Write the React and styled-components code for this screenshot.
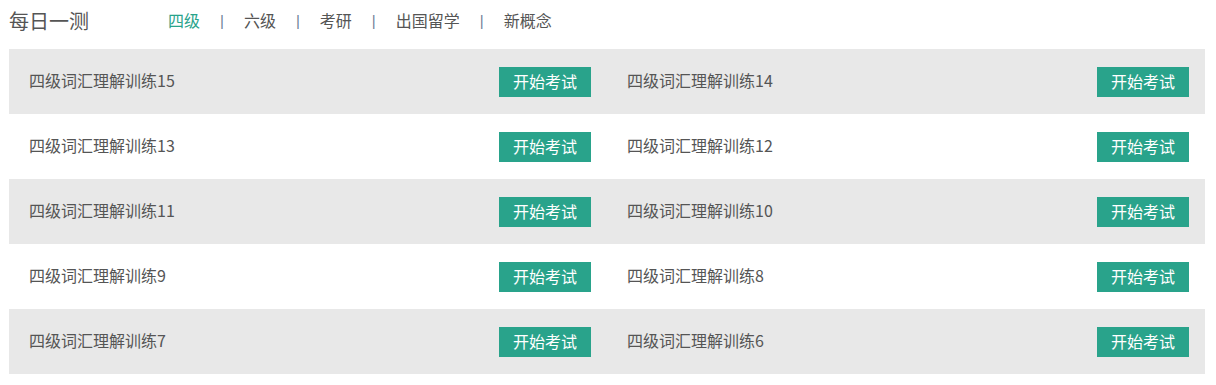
import React from "react";
import styled, { createGlobalStyle } from "styled-components";

const colors = {
  green: "#29a38b",
  grey: "#e8e8e8",
  text: "#555555",
  sep: "#6f7f99"
};

const Global = createGlobalStyle`
  body {
    margin: 0;
    background: #fff;
    font-family: "Microsoft YaHei", "Noto Sans CJK SC", sans-serif;
  }
`;

const Page = styled.div`
  width: 1196px;
  margin-left: 9px;
`;

const Header = styled.div`
  height: 49px;
  display: flex;
  align-items: center;
  padding-bottom: 9px;
  box-sizing: border-box;
`;

const Title = styled.h2`
  margin: 0;
  width: 159px;
  font-size: 20px;
  font-weight: normal;
  color: ${colors.text};
`;

const Tabs = styled.nav`
  display: flex;
  align-items: center;
  font-size: 16px;
`;

const Tab = styled.a`
  color: ${props => (props.active ? colors.green : colors.text)};
  text-decoration: none;
  cursor: pointer;
`;

const Sep = styled.span`
  margin: 0 20px;
  color: ${colors.sep};
  font-family: "Liberation Sans", sans-serif;
  font-size: 15px;
`;

const Grid = styled.div`
  display: grid;
  grid-template-columns: 1fr 1fr;
`;

const Item = styled.div`
  height: 65px;
  display: flex;
  align-items: center;
  justify-content: space-between;
  padding: 0 16px 0 20px;
  background: ${props => (props.shaded ? colors.grey : "#fff")};
`;

const Name = styled.span`
  font-size: 16px;
  padding-bottom: 3px;
  color: ${colors.text};
`;

const Start = styled.button`
  width: 92px;
  height: 30px;
  border: 0;
  padding: 0 0 2px;
  background: ${colors.green};
  color: #fff;
  font-family: inherit;
  font-size: 16px;
  cursor: pointer;
`;

const tabs = ["四级", "六级", "考研", "出国留学", "新概念"];
const tests = [15, 14, 13, 12, 11, 10, 9, 8, 7, 6];

export default function App() {
  return (
    <Page>
      <Global />
      <Header>
        <Title>每日一测</Title>
        <Tabs>
          {tabs.map((t, i) => (
            <React.Fragment key={t}>
              {i > 0 && <Sep>|</Sep>}
              <Tab active={i === 0}>{t}</Tab>
            </React.Fragment>
          ))}
        </Tabs>
      </Header>
      <Grid>
        {tests.map((n, i) => (
          <Item key={n} shaded={Math.floor(i / 2) % 2 === 0}>
            <Name>四级词汇理解训练{n}</Name>
            <Start>开始考试</Start>
          </Item>
        ))}
      </Grid>
    </Page>
  );
}
